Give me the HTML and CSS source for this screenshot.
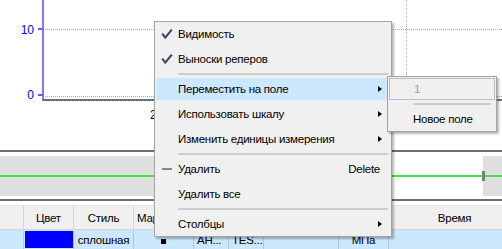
FILE: index.html
```html
<!DOCTYPE html>
<html lang="ru">

<head>
    <meta charset="UTF-8" />
    <title>График</title>
    <link rel="stylesheet" href="styles.css">
</head>

<body>
    <div class="screen">
        <!-- Область графика -->
        <div class="chart">
            <svg class="plot" width="502" height="150" viewBox="0 0 502 150">
                <line x1="45" y1="29.5" x2="502" y2="29.5" class="grid" />
                <line x1="45" y1="96.5" x2="502" y2="96.5" class="grid" />
                <line x1="406.5" y1="0" x2="406.5" y2="99" class="grid" />
                <rect x="42" y="0" width="2" height="101" class="y-axis" />
                <rect x="38" y="28" width="5" height="2" class="tick" />
                <rect x="38" y="94" width="5" height="2" class="tick" />
                <rect x="43" y="99" width="459" height="2" class="x-axis" />
                <text x="34" y="34" class="y-label">10</text>
                <text x="34" y="98.5" class="y-label">0</text>
                <text x="150" y="119" class="x-label">2020</text>
            </svg>
        </div>

        <!-- Шкала времени -->
        <div class="timeline">
            <div class="range">
                <div class="shade shade-left"></div>
                <div class="window"></div>
                <div class="shade shade-right"></div>
            </div>
            <div class="signal"></div>
            <div class="handle"></div>
        </div>

        <!-- Таблица серий -->
        <div class="table">
            <div class="row head">
                <div class="cell c0"></div>
                <div class="cell c1">Цвет</div>
                <div class="cell c2">Стиль</div>
                <div class="cell c3 left">Маркер</div>
                <div class="cell c4"></div>
                <div class="cell c5"></div>
                <div class="cell c6"></div>
                <div class="cell c7"></div>
                <div class="cell c8">Время</div>
            </div>
            <div class="row data">
                <div class="cell c0"></div>
                <div class="cell c1"><span class="swatch"></span></div>
                <div class="cell c2">сплошная</div>
                <div class="cell c3"><span class="marker"></span></div>
                <div class="cell c4 left">АН...</div>
                <div class="cell c5 left">TES...</div>
                <div class="cell c6"></div>
                <div class="cell c7">МПа</div>
                <div class="cell c8"></div>
            </div>
        </div>

        <!-- Контекстное меню -->
        <div class="menu">
            <div class="item">
                <span class="icon">
                    <svg width="12" height="12" viewBox="0 0 12 12"><path d="M1.2 5.6 L4.3 9.6 L10.8 1.6" class="check" /></svg>
                </span>
                <span class="label">Видимость</span>
            </div>
            <div class="item">
                <span class="icon">
                    <svg width="12" height="12" viewBox="0 0 12 12"><path d="M1.2 5.6 L4.3 9.6 L10.8 1.6" class="check" /></svg>
                </span>
                <span class="label">Выноски реперов</span>
            </div>
            <div class="sep"></div>
            <div class="item active">
                <span class="icon"></span>
                <span class="label">Переместить на поле</span>
                <span class="arrow"></span>
            </div>
            <div class="item">
                <span class="icon"></span>
                <span class="label">Использовать шкалу</span>
                <span class="arrow"></span>
            </div>
            <div class="item">
                <span class="icon"></span>
                <span class="label">Изменить единицы измерения</span>
                <span class="arrow"></span>
            </div>
            <div class="sep"></div>
            <div class="item">
                <span class="icon"><span class="dash"></span></span>
                <span class="label">Удалить</span>
                <span class="shortcut">Delete</span>
            </div>
            <div class="item">
                <span class="icon"></span>
                <span class="label">Удалить все</span>
            </div>
            <div class="sep"></div>
            <div class="item">
                <span class="icon"></span>
                <span class="label">Столбцы</span>
                <span class="arrow"></span>
            </div>
        </div>

        <!-- Подменю "Переместить на поле" -->
        <div class="menu submenu">
            <div class="item disabled">
                <span class="label">1</span>
            </div>
            <div class="sep"></div>
            <div class="item">
                <span class="label">Новое поле</span>
            </div>
        </div>
    </div>
</body>

</html>
```

FILE: styles.css
```css
/* Базовый сброс */
* {
    margin: 0;
    padding: 0;
    box-sizing: border-box;
}

html,
body {
    width: 100%;
    height: 100%;
    background-color: #fff;
    color: #000;
    font-family: "Liberation Sans", Arial, sans-serif;
    font-size: 11.5px;
    letter-spacing: -0.25px;
    overflow: hidden;
}

.screen {
    position: relative;
    width: 502px;
    height: 249px;
    overflow: hidden;
}

/* График */
.chart {
    height: 150px;
}

.plot {
    display: block;
}

.grid {
    stroke: #a9a9a9;
    stroke-width: 1;
    stroke-dasharray: 1 1;
}

.y-axis {
    fill: #7a7aff;
}

.tick {
    fill: #5c5cff;
}

.x-axis {
    fill: #6e6e6e;
}

.y-label {
    fill: #0000ff;
    font-size: 12px;
    letter-spacing: 0;
    text-anchor: end;
}

.x-label {
    fill: #000;
    font-size: 12px;
}

/* Шкала времени */
.timeline {
    position: relative;
    height: 51px;
    border-top: 2px solid #6e6e6e;
    border-bottom: 2px solid #6e6e6e;
    padding: 4px 0 3px;
}

.range {
    display: flex;
    height: 100%;
}

.shade {
    background-color: #dfdfdf;
}

.shade-left {
    width: 300px;
}

.window {
    flex: 1;
    background-color: #fff;
}

.shade-right {
    width: 19px;
}

.signal {
    position: absolute;
    left: 0;
    right: 0;
    top: 23px;
    height: 2px;
    background-color: #3fe23f;
}

.handle {
    position: absolute;
    left: 482px;
    top: 19px;
    width: 3px;
    height: 10px;
    background-color: #7f7f7f;
}

/* Таблица */
.table {
    margin-top: 4px;
}

.row {
    display: flex;
    width: 520px;
}

.row.head {
    height: 25px;
    background-color: #f0f0f0;
    border-top: 1px solid #e4e4e4;
    border-bottom: 1px solid #d5d5d5;
}

.row.data {
    height: 19px;
    background-color: #cce8ff;
    padding-top: 1px;
}

.cell {
    display: flex;
    align-items: center;
    justify-content: center;
    border-right: 1px solid #d5d5d5;
    white-space: nowrap;
    overflow: hidden;
}

.row.data .cell {
    border-right-color: #b9c6d2;
    align-items: stretch;
    line-height: 18px;
}

.cell.left {
    justify-content: flex-start;
    padding-left: 3px;
}

.c0 { width: 24px; }
.c1 { width: 50px; }
.c2 { width: 60px; }
.c3 { width: 60px; }
.c4 { width: 35px; }
.c5 { width: 35px; }
.c6 { width: 75px; }
.c7 { width: 50px; }
.c8 { width: 131px; border-right: none; }

.swatch {
    width: 48px;
    background-color: #0000ff;
    margin-bottom: 1px;
}

.marker {
    align-self: center;
    width: 5px;
    height: 5px;
    margin-top: 2px;
    background-color: #000;
}

/* Контекстное меню */
.menu {
    position: absolute;
    left: 154px;
    top: 21px;
    width: 238px;
    display: flex;
    flex-direction: column;
    gap: 3px;
    padding: 1px 2px 1px 1px;
    background-color: #f0f0f0;
    border: 1px solid #a3a3a3;
    box-shadow: 2px 2px 2px rgba(0, 0, 0, 0.28);
}

.item {
    display: flex;
    align-items: center;
    height: 22px;
    padding-right: 7px;
    white-space: nowrap;
}

.item.active {
    background-color: #cce8ff;
}

.icon {
    width: 22px;
    display: flex;
    align-items: center;
    padding-left: 5px;
}

.icon svg {
    display: block;
}

.check {
    fill: none;
    stroke: #3b4c62;
    stroke-width: 2.2;
}

.dash {
    width: 10px;
    height: 2px;
    margin-left: 1px;
    background-color: #7c8898;
}

.label {
    flex: 1;
}

.shortcut {
    margin-right: 2px;
}

.arrow {
    width: 0;
    height: 0;
    border-top: 3.5px solid transparent;
    border-bottom: 3.5px solid transparent;
    border-left: 4px solid #000;
}

.sep {
    height: 2px;
    margin: 0 1px 0 22px;
    background-color: #cdcdcd;
}

/* Подменю */
.submenu {
    left: 387px;
    top: 76px;
    width: 110px;
    padding: 1px 1px;
}

.submenu .item {
    padding-left: 24px;
}

.submenu .item.disabled {
    color: #a0a0a0;
    border: 1px solid #bdbdbd;
}

.submenu .sep {
    margin: 0 4px 0 24px;
}
```
